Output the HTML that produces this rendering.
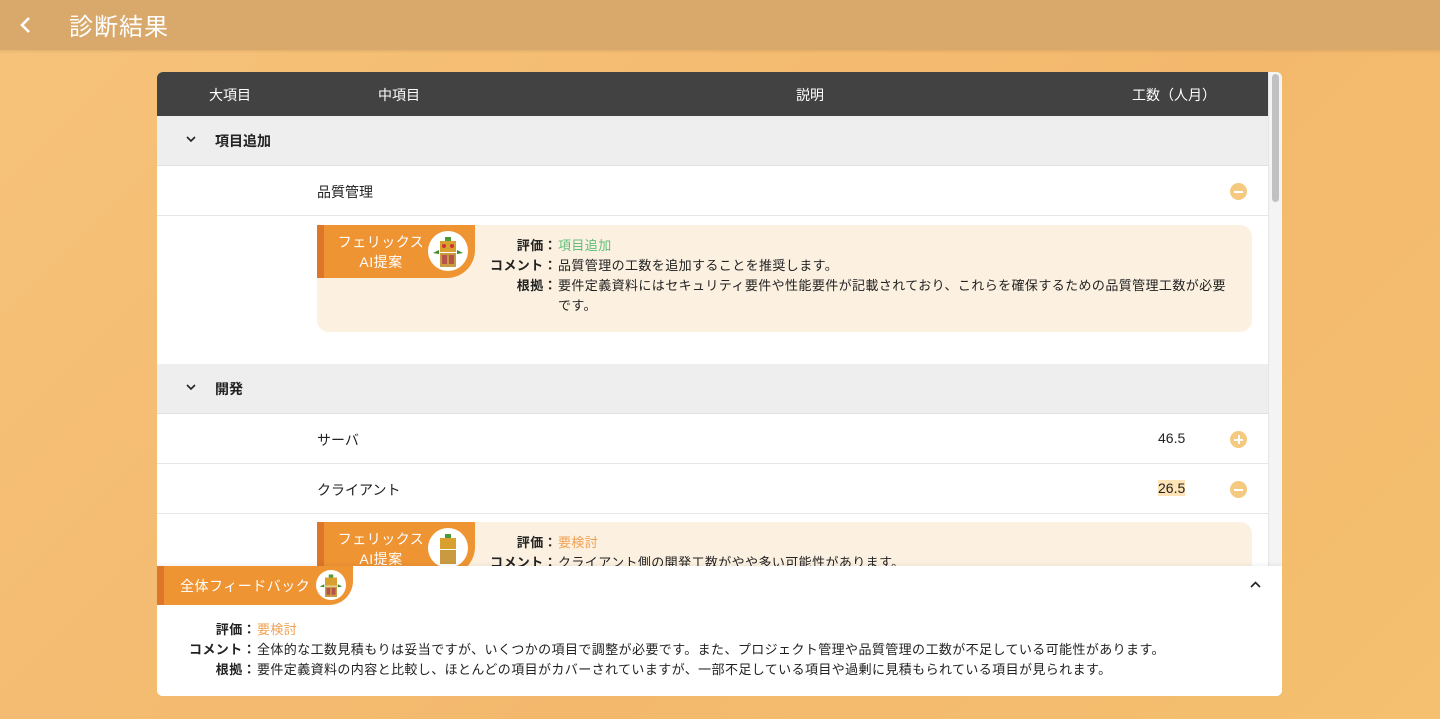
<!DOCTYPE html>
<html><head><meta charset="utf-8"><style>
*{margin:0;padding:0;box-sizing:border-box}
body{width:1440px;height:719px;overflow:hidden;font-family:"Liberation Sans","Noto Sans CJK JP",sans-serif;background:linear-gradient(135deg,#f6c27a 0%,#f3b86c 60%,#f5c070 100%);position:relative;color:#222}
.top{position:absolute;left:0;top:0;width:1440px;height:50px;background:#d8a96b;box-shadow:0 1px 3px rgba(0,0,0,.1)}
.top .t{position:absolute;left:69px;top:7px;font-size:24px;color:#fff;letter-spacing:1px}
.top svg{position:absolute;left:19px;top:16px}
.card{position:absolute;left:157px;top:72px;width:1125px;height:624px;background:#fff;border-radius:6px;overflow:hidden}
.th{position:absolute;left:0;top:0;width:1111px;height:44px;background:#424242;color:#fff;font-size:14px}
.th span{position:absolute;top:13px}
.sb{position:absolute;right:0;top:0;width:14px;height:624px;background:#f4f4f4;border-left:1px solid #e6e6e6}
.sb div{position:absolute;left:3px;top:2px;width:7px;height:128px;background:#c1c1c1;border-radius:4px}
.g{position:absolute;left:0;width:1111px;height:50px;background:#eeeeee;border-bottom:1px solid #e0e0e0;font-size:14px;font-weight:bold}
.g span{position:absolute;left:58px;top:15px}
.g svg{position:absolute;left:29px;top:20px}
.r{position:absolute;left:0;width:1111px;height:50px;border-bottom:1px solid #e6e6e6;font-size:14px}
.r .n{position:absolute;left:160px;top:16px}
.r .v{position:absolute;left:1001px;top:16px}
.ic{position:absolute;left:1073px;top:17px;width:17px;height:17px;border-radius:50%;background:#f5c97f}
.ic:before{content:"";position:absolute;left:4px;top:7.5px;width:9px;height:2px;background:#fff}
.ic.p:after{content:"";position:absolute;left:7.5px;top:4px;width:2px;height:9px;background:#fff}
.ai{position:absolute;left:160px;width:935px;background:#fcf1e1;border-radius:12px;font-size:13px;letter-spacing:.4px}
.tag{position:absolute;left:0;top:0;width:158px;height:53px;background:#ef9433;border-left:7px solid #dd7628;border-radius:0 0 28px 0;color:#fff;font-size:14px;text-align:center;letter-spacing:.5px}
.tag .a{position:absolute;left:12px;top:7px;width:90px;line-height:20px}
.kv{position:absolute;left:241px;line-height:20px}
.kv .k{position:absolute;right:100%;white-space:nowrap;font-weight:bold;padding-right:1px}
.fb{position:absolute;left:0;top:494px;width:1125px;height:130px;background:#fff;box-shadow:0 -2px 4px rgba(0,0,0,.05);z-index:2}
.fbtag{position:absolute;left:0;top:0;width:196px;height:39px;background:#ef9433;border-left:7px solid #dd7628;border-radius:0 0 24px 0;color:#fff;font-size:14px;letter-spacing:.5px}
.fb .kv{letter-spacing:.4px}
</style></head><body>
<div class="top"><svg width="14" height="18" viewBox="0 0 14 18"><path d="M10 2 L3 9 L10 16" stroke="#fff" stroke-width="2.6" fill="none"/></svg><div class="t">診断結果</div></div>
<div class="card">
<div class="th"><span style="left:52px">大項目</span><span style="left:221px">中項目</span><span style="left:639px">説明</span><span style="left:975px">工数（人月）</span></div>
<div class="g" style="top:44px"><svg width="10" height="7" viewBox="0 0 10 7"><path d="M1 1 L5 5 L9 1" stroke="#222" stroke-width="1.6" fill="none"/></svg><span>項目追加</span></div>
<div class="r" style="top:94px"><span class="n">品質管理</span><div class="ic"></div></div>
<div class="ai" style="top:153px;height:107px">
 <div class="tag"><div class="a">フェリックス<br>AI提案</div>
 <svg style="position:absolute;left:104px;top:6px" width="40" height="40" viewBox="0 0 40 40"><circle cx="20" cy="20" r="20" fill="#fff"/><path d="M5 22 L11 19 L11 23 Z M35 22 L29 19 L29 23Z" fill="#3a8a2a"/><rect x="17" y="6" width="6" height="5" fill="#4a9a3a"/><rect x="12" y="10" width="16" height="11" fill="#d9a030"/><circle cx="16" cy="15" r="2" fill="#c33"/><circle cx="24" cy="15" r="2" fill="#c33"/><rect x="12" y="22" width="16" height="14" fill="#c99a40"/><rect x="14" y="24" width="5" height="9" fill="#b5534a"/><rect x="21" y="24" width="5" height="9" fill="#b5534a"/></svg></div>
 <div class="kv" style="top:11px"><span class="k">評価：</span><span style="color:#5fbf7a">項目追加</span></div>
 <div class="kv" style="top:31px"><span class="k">コメント：</span>品質管理の工数を追加することを推奨します。</div>
 <div class="kv" style="top:51px;width:680px"><span class="k">根拠：</span>要件定義資料にはセキュリティ要件や性能要件が記載されており、これらを確保するための品質管理工数が必要です。</div>
</div>
<div class="g" style="top:292px"><svg width="10" height="7" viewBox="0 0 10 7"><path d="M1 1 L5 5 L9 1" stroke="#222" stroke-width="1.6" fill="none"/></svg><span>開発</span></div>
<div class="r" style="top:342px"><span class="n">サーバ</span><span class="v">46.5</span><div class="ic p"></div></div>
<div class="r" style="top:392px"><span class="n">クライアント</span><span class="v" style="background:#fde3b5">26.5</span><div class="ic"></div></div>
<div class="ai" style="top:450px;height:107px">
 <div class="tag"><div class="a">フェリックス<br>AI提案</div>
 <svg style="position:absolute;left:104px;top:6px" width="40" height="40" viewBox="0 0 40 40"><circle cx="20" cy="20" r="20" fill="#fff"/><rect x="17" y="6" width="6" height="5" fill="#4a9a3a"/><rect x="12" y="10" width="16" height="11" fill="#d9a030"/><rect x="12" y="22" width="16" height="14" fill="#c99a40"/></svg></div>
 <div class="kv" style="top:11px"><span class="k">評価：</span><span style="color:#f0a050">要検討</span></div>
 <div class="kv" style="top:31px"><span class="k">コメント：</span>クライアント側の開発工数がやや多い可能性があります。</div>
</div>
<div class="sb"><div></div></div>
<div class="fb">
 <div class="fbtag"><span style="position:absolute;left:16px;top:10px">全体フィードバック</span>
 <svg style="position:absolute;left:152px;top:4px" width="30" height="30" viewBox="0 0 40 40"><circle cx="20" cy="20" r="20" fill="#fff"/><path d="M5 22 L11 19 L11 23 Z M35 22 L29 19 L29 23Z" fill="#3a8a2a"/><rect x="17" y="6" width="6" height="5" fill="#4a9a3a"/><rect x="12" y="10" width="16" height="11" fill="#d9a030"/><rect x="12" y="22" width="16" height="14" fill="#c99a40"/><rect x="14" y="24" width="5" height="9" fill="#b5534a"/><rect x="21" y="24" width="5" height="9" fill="#b5534a"/></svg></div>
 <svg style="position:absolute;left:1093px;top:15px" width="11" height="7" viewBox="0 0 11 7"><path d="M1 6 L5.5 1.5 L10 6" stroke="#222" stroke-width="1.6" fill="none"/></svg>
 <div class="kv" style="left:100px;top:54px;font-size:13px"><span class="k">評価：</span><span style="color:#f0a050">要検討</span></div>
 <div class="kv" style="left:100px;top:74px;font-size:13px;white-space:nowrap"><span class="k">コメント：</span>全体的な工数見積もりは妥当ですが、いくつかの項目で調整が必要です。また、プロジェクト管理や品質管理の工数が不足している可能性があります。</div>
 <div class="kv" style="left:100px;top:94px;font-size:13px;white-space:nowrap"><span class="k">根拠：</span>要件定義資料の内容と比較し、ほとんどの項目がカバーされていますが、一部不足している項目や過剰に見積もられている項目が見られます。</div>
</div>
</div>
</body></html>
